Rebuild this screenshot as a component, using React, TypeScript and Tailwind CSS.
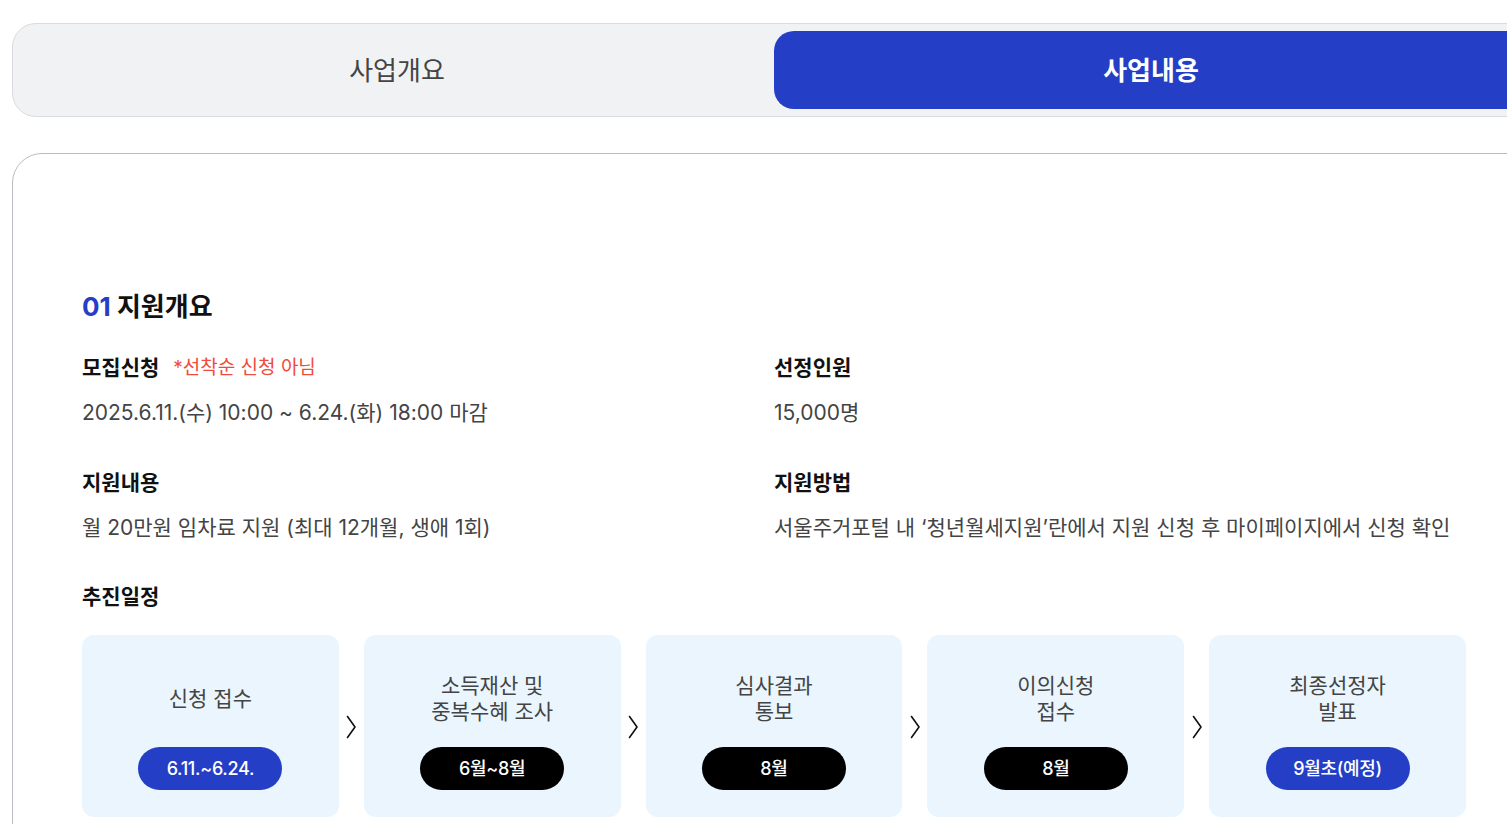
import React from "react";

const font = { fontFamily: 'Inter, "Noto Sans CJK KR", "Noto Sans", sans-serif' };

type Step = { title: string[]; date: string; blue?: boolean };

const steps: Step[] = [
  { title: ["신청 접수"], date: "6.11.~6.24.", blue: true },
  { title: ["소득재산 및", "중복수혜 조사"], date: "6월~8월" },
  { title: ["심사결과", "통보"], date: "8월" },
  { title: ["이의신청", "접수"], date: "8월" },
  { title: ["최종선정자", "발표"], date: "9월초(예정)", blue: true },
];

function Chevron() {
  return (
    <div className="w-[25px] flex items-center justify-center pt-[2px]">
      <svg width="14" height="26" viewBox="0 0 14 26" fill="none">
        <path d="M3.5 2.5 L11 13 L3.5 23.5" stroke="#111" strokeWidth="1.6" strokeLinecap="round" strokeLinejoin="round" />
      </svg>
    </div>
  );
}

export default function App() {
  return (
    <div className="w-[1507px] h-[824px] overflow-hidden bg-white" style={font}>
      <div className="w-[1548px] pl-3 pt-[23px]">
        <div className="w-[1524px] h-[94px] rounded-[24px] border border-[#d9dbde] bg-[#f1f2f4] p-[7px] flex">
          <div className="flex-1 flex items-center justify-center text-[26px] text-[#444]">사업개요</div>
          <div className="flex-1 flex items-center justify-center rounded-[20px] bg-[#243fc6] text-[26px] font-bold text-white">
            사업내용
          </div>
        </div>

        <div className="mt-[36px] w-[1524px] h-[720px] rounded-tl-[30px] border border-[#b9bdc1] px-[69px] pt-[135px]">
          <h2 className="text-[26px] leading-[36px] font-bold text-[#111]">
            <span className="text-[#243fc6]">01</span> 지원개요
          </h2>

          <div className="mt-[29px] grid grid-cols-2">
            <div>
              <div className="flex items-center h-[28px]">
                <span className="text-[21px] font-bold text-[#111]">모집신청</span>
                <span className="ml-[14px] text-[19px] text-[#ef4b3c]">*선착순 신청 아님</span>
              </div>
              <div className="mt-[17px] text-[21px] leading-[28px] text-[#444]">
                2025.6.11.(수) 10:00 ~ 6.24.(화) 18:00 마감
              </div>
            </div>
            <div>
              <div className="h-[28px] flex items-center text-[21px] font-bold text-[#111]">선정인원</div>
              <div className="mt-[17px] text-[21px] leading-[28px] text-[#444]">15,000명</div>
            </div>
            <div className="mt-[42px]">
              <div className="h-[28px] flex items-center text-[21px] font-bold text-[#111]">지원내용</div>
              <div className="mt-[17px] text-[21px] leading-[28px] text-[#444]">
                월 20만원 임차료 지원 (최대 12개월, 생애 1회)
              </div>
            </div>
            <div className="mt-[42px]">
              <div className="h-[28px] flex items-center text-[21px] font-bold text-[#111]">지원방법</div>
              <div className="mt-[17px] text-[21px] leading-[28px] text-[#444] whitespace-nowrap">
                서울주거포털 내 ‘청년월세지원’란에서 지원 신청 후 마이페이지에서 신청 확인
              </div>
            </div>
          </div>

          <div className="mt-[41px] h-[28px] flex items-center text-[21px] font-bold text-[#111]">추진일정</div>

          <div className="mt-[24px] flex">
            {steps.map((s, i) => (
              <React.Fragment key={i}>
                {i > 0 && <Chevron />}
                <div className="flex-1 h-[182px] rounded-[12px] bg-[#eaf5fe] flex flex-col items-center pt-[38px]">
                  <div className="h-[52px] flex flex-col items-center justify-center text-[21px] leading-[26px] text-[#444] text-center">
                    {s.title.map((t, j) => (
                      <div key={j}>{t}</div>
                    ))}
                  </div>
                  <div
                    className={
                      "mt-[22px] w-[144px] h-[43px] rounded-full flex items-center justify-center text-[18px] font-medium text-white tracking-[-0.3px] " +
                      (s.blue ? "bg-[#243fc6]" : "bg-black")
                    }
                  >
                    {s.date}
                  </div>
                </div>
              </React.Fragment>
            ))}
          </div>
        </div>
      </div>
    </div>
  );
}
